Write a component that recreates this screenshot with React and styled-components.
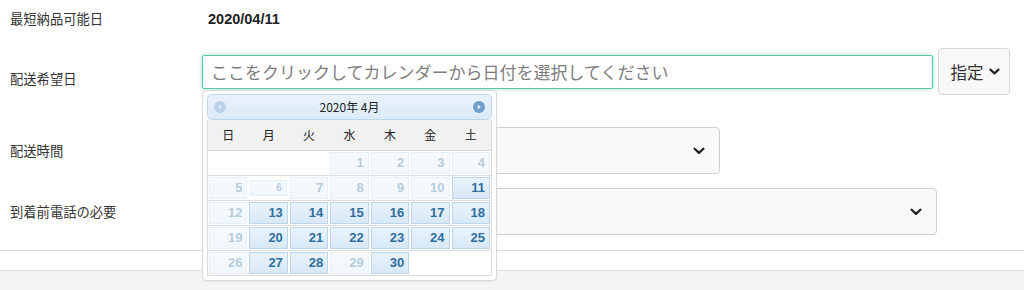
import React from 'react'
import styled, { createGlobalStyle } from 'styled-components'

const GlobalStyle = createGlobalStyle`
  html, body {
    margin: 0;
    padding: 0;
    background: #fff;
  }
  body {
    font-family: "Noto Sans CJK JP", "Liberation Sans", sans-serif;
    color: #333;
  }
`

const weekdays = ['日', '月', '火', '水', '木', '金', '土']
const enabledDays = [11, 13, 14, 15, 16, 17, 18, 20, 21, 22, 23, 24, 25, 27, 28, 30]

const buildWeeks = () => {
  const cells = [null, null, null]
  for (let d = 1; d <= 30; d++) cells.push(d)
  while (cells.length % 7) cells.push(null)
  const weeks = []
  for (let i = 0; i < cells.length; i += 7) weeks.push(cells.slice(i, i + 7))
  return weeks
}

const Chevron = ({ size = 12 }) => (
  <svg width={size} height={size * 0.65} viewBox="0 0 12 8" fill="none">
    <path d="M1.5 1.8 L6 6 L10.5 1.8" stroke="#222" strokeWidth="2.4" strokeLinecap="round" strokeLinejoin="round" />
  </svg>
)

const NavIcon = ({ dir, disabled }) => (
  <NavCircle $disabled={disabled}>
    <svg width="12" height="12" viewBox="0 0 12 12">
      <circle cx="6" cy="6" r="6" fill="#6f9fcb" />
      {dir === 'prev'
        ? <path d="M7.2 3.4 L4.2 6 L7.2 8.6 Z" fill="#e8f1fa" />
        : <path d="M4.8 3.4 L7.8 6 L4.8 8.6 Z" fill="#e8f1fa" />}
    </svg>
  </NavCircle>
)

const DatePicker = () => (
  <Calendar>
    <CalHeader>
      <NavIcon dir="prev" disabled />
      <CalTitle>2020年 4月</CalTitle>
      <NavIcon dir="next" />
    </CalHeader>
    <CalTable>
      <WeekRow>
        {weekdays.map((w) => <WeekName key={w}>{w}</WeekName>)}
      </WeekRow>
      {buildWeeks().map((week, i) => (
        <DayRow key={i}>
          {week.map((d, j) => (
            <DaySlot key={j}>
              {d && (
                <DayCell $disabled={!enabledDays.includes(d)} $small={d === 6}>
                  {d}
                </DayCell>
              )}
            </DaySlot>
          ))}
        </DayRow>
      ))}
    </CalTable>
  </Calendar>
)

const App = () => {
  return (
    <>
      <GlobalStyle />
      <Form>
        <Row $h={38}>
          <Label>最短納品可能日</Label>
          <Value>2020/04/11</Value>
        </Row>
        <Row $h={62} $mt={10}>
          <Label>配送希望日</Label>
          <FieldGroup>
            <DateWrap>
              <DateInput placeholder="ここをクリックしてカレンダーから日付を選択してください" />
              <DatePicker />
            </DateWrap>
            <ModeButton>
              指定
              <Chevron size={11} />
            </ModeButton>
          </FieldGroup>
        </Row>
        <Row $h={47} $mt={17}>
          <Label>配送時間</Label>
          <Select $w={518}>
            <Chevron />
          </Select>
        </Row>
        <Row $h={47} $mt={14}>
          <Label>到着前電話の必要</Label>
          <Select $w={735}>
            <Chevron />
          </Select>
        </Row>
        <Divider />
        <Footer />
      </Form>
    </>
  )
}

export default App

const Form = styled.div`
  width: 1024px;
  display: flex;
  flex-direction: column;
`

const Row = styled.div`
  display: flex;
  align-items: center;
  height: ${(p) => p.$h}px;
  margin-top: ${(p) => p.$mt || 0}px;
  padding-left: 10px;
`

const Label = styled.div`
  width: 192px;
  flex: none;
  font-size: 13.3px;
  color: #333;
  line-height: 1;
`

const Value = styled.div`
  padding-left: 6px;
  font-family: "Liberation Sans", "Noto Sans CJK JP", sans-serif;
  font-weight: bold;
  font-size: 14.5px;
  color: #222;
`

const FieldGroup = styled.div`
  align-self: flex-start;
  display: flex;
  align-items: center;
  gap: 5px;
`

const DateWrap = styled.div`
  position: relative;
`

const DateInput = styled.input`
  box-sizing: border-box;
  width: 731px;
  height: 34px;
  padding: 0 8px;
  border: 1px solid #5cc8a6;
  border-radius: 2px;
  box-shadow: 0 0 4px rgba(92, 200, 166, 0.6);
  outline: none;
  font-family: "Noto Sans CJK JP", sans-serif;
  font-size: 17px;
  color: #333;

  &::placeholder {
    color: #7d7d7d;
  }
`

const ModeButton = styled.button`
  box-sizing: border-box;
  width: 72px;
  height: 47px;
  display: flex;
  align-items: center;
  justify-content: center;
  gap: 5px;
  padding: 0 0 0 2px;
  background: #f8f8f8;
  border: 1px solid #d6d6d6;
  border-radius: 4px;
  font-family: "Noto Sans CJK JP", sans-serif;
  font-size: 16.5px;
  color: #333;
`

const Select = styled.div`
  box-sizing: border-box;
  width: ${(p) => p.$w}px;
  height: 47px;
  display: flex;
  align-items: center;
  justify-content: flex-end;
  padding-right: 14px;
  background: #f9f9f9;
  border: 1px solid #cfcfcf;
  border-radius: 4px;
`

const Divider = styled.div`
  margin-top: 15px;
  height: 19px;
  border-top: 1px solid #dcdcdc;
`

const Footer = styled.div`
  height: 20px;
  border-top: 1px solid #e2e2e2;
  background: #f5f5f5;
`

const Calendar = styled.div`
  position: absolute;
  top: calc(100% + 1px);
  left: 0;
  z-index: 10;
  box-sizing: border-box;
  width: 295px;
  padding: 3px 4px 4px;
  background: #fff;
  border: 1px solid #dadada;
  border-radius: 4px;
  box-shadow: 0 1px 2px rgba(0, 0, 0, 0.05);
`

const CalHeader = styled.div`
  box-sizing: border-box;
  height: 26px;
  display: flex;
  align-items: center;
  justify-content: space-between;
  padding: 0 6px;
  background: linear-gradient(#e8f2fb, #dcebf8);
  border: 1px solid #bcd6ec;
  border-radius: 5px;
`

const NavCircle = styled.span`
  display: flex;
  opacity: ${(p) => (p.$disabled ? 0.35 : 1)};
`

const CalTitle = styled.span`
  font-size: 12px;
  font-weight: 400;
  color: #222;
`

const CalTable = styled.div`
  border: 1px solid #dcdcdc;
  border-top: none;
`

const WeekRow = styled.div`
  display: grid;
  grid-template-columns: repeat(7, 1fr);
  height: 30px;
  align-items: center;
  background: #f1f1f1;
  border-bottom: 1px solid #d6d6d6;
`

const WeekName = styled.span`
  text-align: center;
  font-size: 12px;
  color: #222;
`

const DayRow = styled.div`
  display: grid;
  grid-template-columns: repeat(7, 1fr);
  border-bottom: 1px solid #dcdcdc;

  &:last-child {
    border-bottom: none;
  }
`

const DaySlot = styled.div`
  height: 24px;
  padding: 1px;
  box-sizing: border-box;
  display: flex;
`

const DayCell = styled.div`
  flex: 1;
  box-sizing: border-box;
  margin: ${(p) => (p.$small ? '3px 1px' : '0')};
  display: flex;
  align-items: center;
  justify-content: flex-end;
  padding-right: 4px;
  background: linear-gradient(#e9f3fc, #d8e8f7);
  border: 1px solid #bcd5ea;
  color: #2e6e9e;
  font-family: "Liberation Sans", sans-serif;
  font-weight: bold;
  font-size: ${(p) => (p.$small ? '10px' : '13px')};
  opacity: ${(p) => (p.$disabled ? 0.35 : 1)};
`
